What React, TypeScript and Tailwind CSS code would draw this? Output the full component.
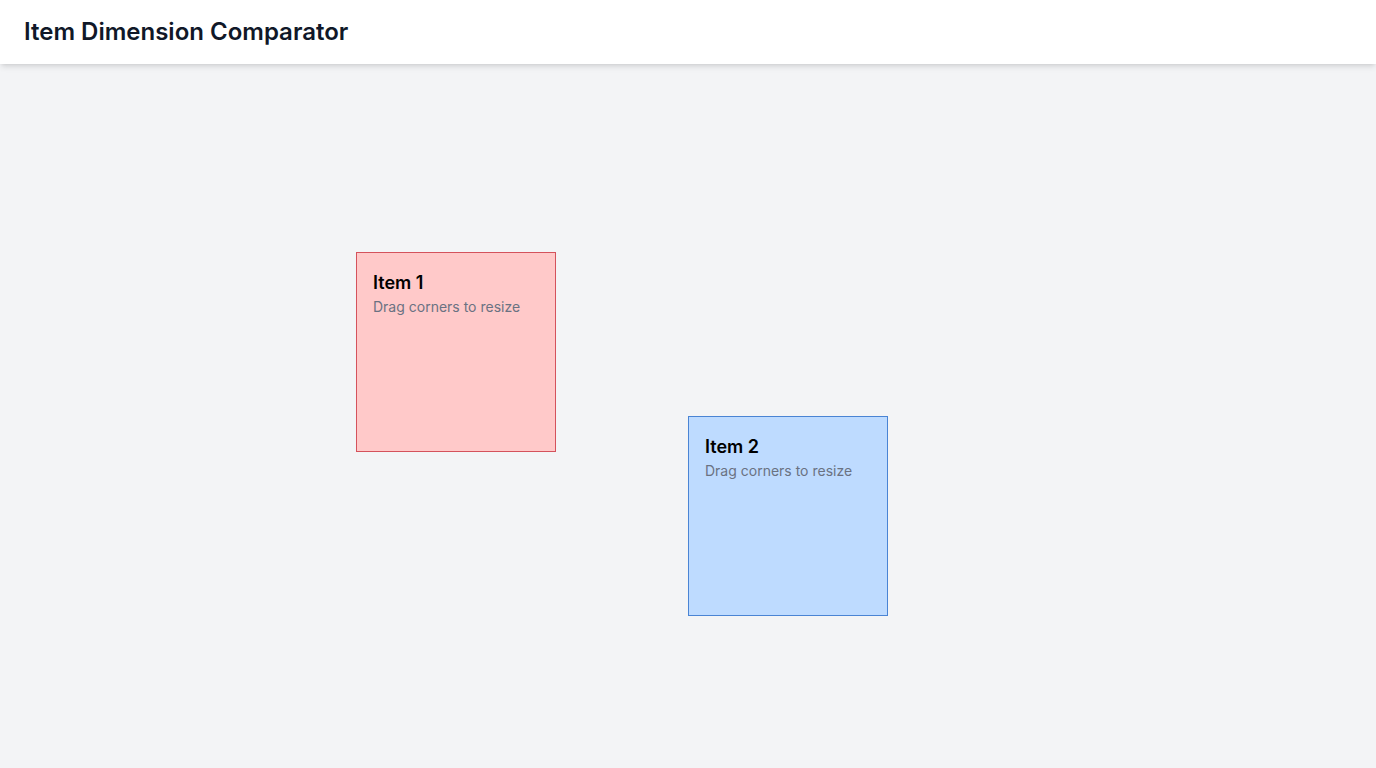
import React from "react";

export default function App() {
  return (
    <div className="min-h-screen bg-gray-100 flex flex-col" style={{ fontFamily: "Inter, 'Noto Sans', sans-serif" }}>
      <header className="h-16 bg-white shadow-md flex items-center px-6 relative z-10">
        <h1 className="text-2xl font-semibold text-gray-900">Item Dimension Comparator</h1>
      </header>
      <main className="relative flex-1 h-[704px]">
        <div className="absolute left-[356px] top-[188px] w-[200px] h-[200px] bg-red-200 border border-[#d4525c] p-4">
          <div className="text-lg font-semibold text-black leading-7">Item 1</div>
          <div className="text-sm text-gray-500">Drag corners to resize</div>
        </div>
        <div className="absolute left-[688px] top-[352px] w-[200px] h-[200px] bg-blue-200 border border-[#4a84d4] p-4">
          <div className="text-lg font-semibold text-black leading-7">Item 2</div>
          <div className="text-sm text-gray-500">Drag corners to resize</div>
        </div>
      </main>
    </div>
  );
}
